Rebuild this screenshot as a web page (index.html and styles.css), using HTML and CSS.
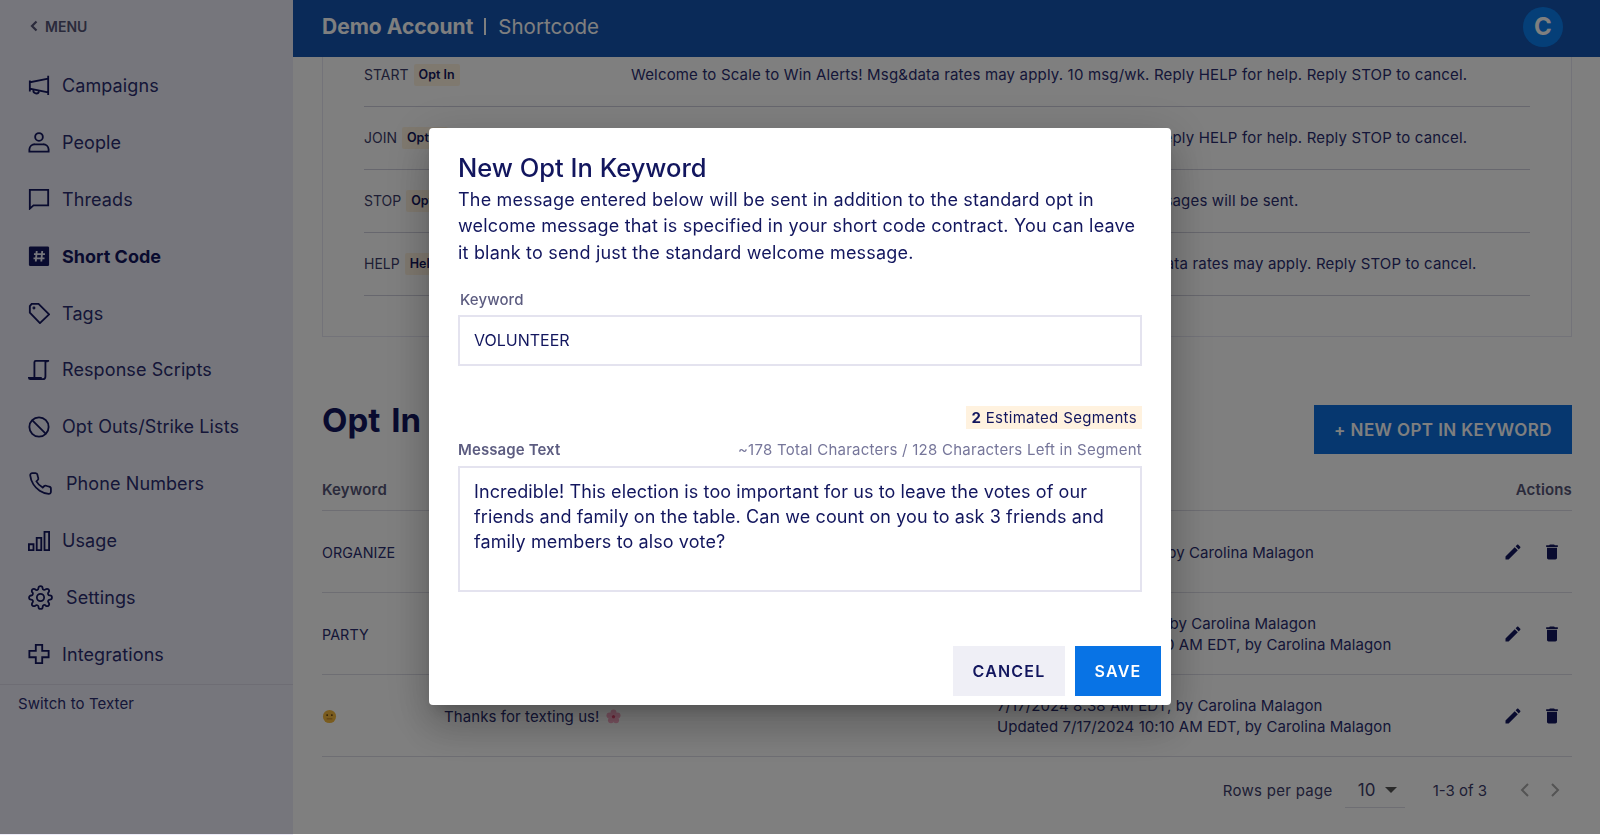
FILE: index.html
```html
<!DOCTYPE html>
<html lang="en">
<head>
<meta charset="utf-8">
<title>Short Code</title>
<link rel="stylesheet" href="styles.css">
</head>
<body>
<div class="app">
  <aside class="sidebar">
    <div class="menu-toggle">
      <svg class="chev" viewBox="0 0 8 12"><path d="M6.500 1.500 2 6l4.500 4.500"/></svg>
      <span>MENU</span>
    </div>
    <nav class="nav">
      <a class="nav-item"><svg class="ico" viewBox="0 0 24 24"><path d="M22 2v21M22 5 2 9v7l20 4M2 7v12"/><path d="M6 17.500a3 3 0 0 0 6 1.300"/></svg><span>Campaigns</span></a>
      <a class="nav-item"><svg class="ico" viewBox="0 0 24 24"><circle cx="12" cy="6.500" r="4.200"/><path d="M1.500 22.500v-2.500a6 6 0 0 1 6-5.500h9a6 6 0 0 1 6 5.500v2.500z"/></svg><span>People</span></a>
      <a class="nav-item"><svg class="ico" viewBox="0 0 24 24"><path d="M2 2h20v17H6l-4 3.500z"/></svg><span>Threads</span></a>
      <a class="nav-item active"><svg class="ico" viewBox="0 0 24 24"><rect class="solid" x="1" y="1.500" width="22" height="21.500" rx="1.500"/><path class="hash" d="M9.500 6.500 8.500 18M15.500 6.500 14.500 18M6.500 10h12M6 14.500h12"/></svg><span>Short Code</span></a>
      <a class="nav-item"><svg class="ico" viewBox="0 0 24 24"><path d="M2 4.500 4 2h7.500L23 13.500 13 23 2 11.500z"/><circle cx="6.500" cy="6.500" r=".6"/></svg><span>Tags</span></a>
      <a class="nav-item"><svg class="ico" viewBox="0 0 24 24"><path d="M7 20V3.500A1.500 1.500 0 0 1 8.500 2H23M20.500 2v1.500M19 2.500V19a3 3 0 0 1-3 3H2.500A1.500 1.500 0 0 1 1 20.500h14"/></svg><span>Response Scripts</span></a>
      <a class="nav-item"><svg class="ico" viewBox="0 0 24 24"><circle cx="12" cy="12" r="10.500"/><path d="m4.500 4.500 15 15"/></svg><span>Opt Outs/Strike Lists</span></a>
      <a class="nav-item wide"><svg class="ico" viewBox="0 0 24 24"><path d="M22 16.920v3a2 2 0 0 1-2.180 2 19.790 19.790 0 0 1-8.630-3.070 19.500 19.500 0 0 1-6-6 19.790 19.790 0 0 1-3.070-8.670A2 2 0 0 1 4.110 2h3a2 2 0 0 1 2 1.720 12.840 12.840 0 0 0 .7 2.810 2 2 0 0 1-.45 2.110L8.090 9.910a16 16 0 0 0 6 6l1.270-1.270a2 2 0 0 1 2.110-.45 12.840 12.840 0 0 0 2.810.7A2 2 0 0 1 22 16.920z"/></svg><span>Phone Numbers</span></a>
      <a class="nav-item"><svg class="ico" viewBox="0 0 24 24"><path d="M1 15.500h5V22H1zM9.500 8.500h5V22h-5zM18 2h5v20h-5z"/></svg><span>Usage</span></a>
      <a class="nav-item wide"><svg class="ico" viewBox="0 0 24 24"><circle cx="12" cy="12" r="3.500"/><path d="M19.400 15a1.650 1.650 0 0 0 .33 1.820l.06.06a2 2 0 0 1 0 2.830 2 2 0 0 1-2.830 0l-.06-.06a1.650 1.650 0 0 0-1.820-.33 1.650 1.650 0 0 0-1 1.510V21a2 2 0 0 1-2 2 2 2 0 0 1-2-2v-.09A1.650 1.650 0 0 0 9 19.400a1.650 1.650 0 0 0-1.820.33l-.06.06a2 2 0 0 1-2.830 0 2 2 0 0 1 0-2.830l.06-.06a1.650 1.650 0 0 0 .33-1.820 1.650 1.650 0 0 0-1.510-1H3a2 2 0 0 1-2-2 2 2 0 0 1 2-2h.09A1.650 1.650 0 0 0 4.600 9a1.650 1.650 0 0 0-.33-1.820l-.06-.06a2 2 0 0 1 0-2.830 2 2 0 0 1 2.830 0l.06.06a1.650 1.650 0 0 0 1.820.33H9a1.650 1.650 0 0 0 1-1.510V3a2 2 0 0 1 2-2 2 2 0 0 1 2 2v.09a1.650 1.650 0 0 0 1 1.510 1.650 1.650 0 0 0 1.820-.33l.06-.06a2 2 0 0 1 2.830 0 2 2 0 0 1 0 2.830l-.06.06a1.650 1.650 0 0 0-.33 1.820V9a1.650 1.650 0 0 0 1.510 1H21a2 2 0 0 1 2 2 2 2 0 0 1-2 2h-.09a1.650 1.650 0 0 0-1.510 1z"/></svg><span>Settings</span></a>
      <a class="nav-item"><svg class="ico" viewBox="0 0 24 24"><path d="M8.500 2h7v6.500H22.500v7h-7V22h-7v-6.500H1.500v-7h7z"/></svg><span>Integrations</span></a>
    </nav>
    <div class="switch">Switch to Texter</div>
  </aside>

  <main class="main">
    <header class="topbar">
      <strong class="account">Demo Account</strong>
      <span class="sep"></span>
      <span class="page-name">Shortcode</span>
      <span class="avatar">C</span>
    </header>
    <div class="content">
      <section class="card">
        <div class="kw-row">
          <div class="kw-name"><span>START</span><span class="chip">Opt In</span></div>
          <div class="kw-msg">Welcome to Scale to Win Alerts! Msg&amp;data rates may apply. 10 msg/wk. Reply HELP for help. Reply STOP to cancel.</div>
        </div>
        <div class="kw-row">
          <div class="kw-name"><span>JOIN</span><span class="chip">Opt In</span></div>
          <div class="kw-msg">Welcome to Scale to Win Alerts! Msg&amp;data rates may apply. 10 msg/wk. Reply HELP for help. Reply STOP to cancel.</div>
        </div>
        <div class="kw-row">
          <div class="kw-name"><span>STOP</span><span class="chip">Opt Out</span></div>
          <div class="kw-msg">You have been unsubscribed from Scale to Win Alerts. No more SMS messages will be sent.</div>
        </div>
        <div class="kw-row">
          <div class="kw-name"><span>HELP</span><span class="chip">Help</span></div>
          <div class="kw-msg">Scale to Win Alerts: Help via helpdesk@scaletowin.com or text us. Msg&amp;data rates may apply. Reply STOP to cancel.</div>
        </div>
      </section>

      <div class="section-head">
        <h2 class="section-title">Opt In Keywords</h2>
        <button class="primary-btn">+ NEW OPT IN KEYWORD</button>
      </div>

      <div class="table">
        <div class="t-row t-head">
          <div class="c-key">Keyword</div>
          <div class="c-msg">Message</div>
          <div class="c-date">Details</div>
          <div class="c-act">Actions</div>
        </div>
        <div class="t-row">
          <div class="c-key">ORGANIZE</div>
          <div class="c-msg">Thanks for organizing with us!</div>
          <div class="c-date">7/1/2024 8:38 AM EDT, by Carolina Malagon</div>
          <div class="c-act"><svg class="act" viewBox="0 0 24 24"><path d="M3 17.250V21h3.750L17.810 9.940l-3.750-3.750L3 17.250zM20.710 7.040c.39-.39.39-1.020 0-1.410l-2.340-2.340c-.39-.39-1.020-.39-1.410 0l-1.830 1.830 3.750 3.750 1.830-1.830z"/></svg><svg class="act" viewBox="0 0 24 24"><path d="M6 19c0 1.100.9 2 2 2h8c1.100 0 2-.9 2-2V7H6v12zM19 4h-3.500l-1-1h-5l-1 1H5v2h14V4z"/></svg></div>
        </div>
        <div class="t-row">
          <div class="c-key">PARTY</div>
          <div class="c-msg">See you at the party!</div>
          <div class="c-date">7/17/2024 8:11 AM EDT, by Carolina Malagon<br>Updated 7/17/2024 10:10 AM EDT, by Carolina Malagon</div>
          <div class="c-act"><svg class="act" viewBox="0 0 24 24"><path d="M3 17.250V21h3.750L17.810 9.940l-3.750-3.750L3 17.250zM20.710 7.040c.39-.39.39-1.020 0-1.410l-2.340-2.340c-.39-.39-1.020-.39-1.410 0l-1.830 1.830 3.750 3.750 1.830-1.830z"/></svg><svg class="act" viewBox="0 0 24 24"><path d="M6 19c0 1.100.9 2 2 2h8c1.100 0 2-.9 2-2V7H6v12zM19 4h-3.500l-1-1h-5l-1 1H5v2h14V4z"/></svg></div>
        </div>
        <div class="t-row">
          <div class="c-key"><svg class="emoji" viewBox="0 0 16 16"><circle cx="8" cy="8" r="7" fill="#f5b83d"/><circle cx="5.500" cy="6.500" r="1" fill="#5a3d10"/><circle cx="10.500" cy="6.500" r="1" fill="#5a3d10"/><path d="M5 10.500h6" stroke="#b57a20" fill="none"/></svg></div>
          <div class="c-msg">Thanks for texting us! <svg class="emoji" viewBox="0 0 16 16"><g fill="#f7a8c4"><circle cx="8" cy="3.700" r="3.200"/><circle cx="12.300" cy="6.800" r="3.200"/><circle cx="10.700" cy="12" r="3.200"/><circle cx="5.300" cy="12" r="3.200"/><circle cx="3.700" cy="6.800" r="3.200"/></g><circle cx="8" cy="8.300" r="1.800" fill="#e2486f"/></svg></div>
          <div class="c-date">7/17/2024 8:38 AM EDT, by Carolina Malagon<br>Updated 7/17/2024 10:10 AM EDT, by Carolina Malagon</div>
          <div class="c-act"><svg class="act" viewBox="0 0 24 24"><path d="M3 17.250V21h3.750L17.810 9.940l-3.750-3.750L3 17.250zM20.710 7.040c.39-.39.39-1.020 0-1.410l-2.340-2.340c-.39-.39-1.020-.39-1.410 0l-1.830 1.830 3.750 3.750 1.830-1.830z"/></svg><svg class="act" viewBox="0 0 24 24"><path d="M6 19c0 1.100.9 2 2 2h8c1.100 0 2-.9 2-2V7H6v12zM19 4h-3.500l-1-1h-5l-1 1H5v2h14V4z"/></svg></div>
        </div>
      </div>

      <div class="pager">
        <span>Rows per page</span>
        <span class="pager-select"><span>10</span><i class="caret"></i></span>
        <span class="pager-count">1-3 of 3</span>
        <svg class="pg" viewBox="0 0 12 16"><path d="M9 2 3 8l6 6"/></svg>
        <svg class="pg" viewBox="0 0 12 16"><path d="m3 2 6 6-6 6"/></svg>
      </div>
    </div>
  </main>
</div>

<div class="overlay">
  <div class="modal">
    <h1 class="modal-title">New Opt In Keyword</h1>
    <p class="modal-desc">The message entered below will be sent in addition to the standard opt in<br>welcome message that is specified in your short code contract. You can leave<br>it blank to send just the standard welcome message.</p>
    <div class="field-label kw-label">Keyword</div>
    <div class="input">VOLUNTEER</div>
    <div class="badge-row"><span class="badge"><b>2</b> Estimated Segments</span></div>
    <div class="msg-head"><span class="field-label">Message Text</span><span class="counter">~178 Total Characters / 128 Characters Left in Segment</span></div>
    <div class="textarea">Incredible! This election is too important for us to leave the votes of our<br>friends and family on the table. Can we count on you to ask 3 friends and<br>family members to also vote?</div>
    <div class="actions">
      <button class="btn cancel">CANCEL</button>
      <button class="btn save">SAVE</button>
    </div>
  </div>
</div>
</body>
</html>
```
FILE: styles.css
```css
* { box-sizing: border-box; }
html, body { margin: 0; height: 100%; }
body {
  font-family: Inter, "Noto Sans", sans-serif;
  color: #12165e;
  background: #fff;
  overflow: hidden;
}

.app { display: flex; height: 835px; overflow: hidden; }

/* Sidebar */
.sidebar { width: 293px; flex: none; background: #edecf8; }
.menu-toggle {
  height: 57px;
  padding: 0 0 5px 30px;
  display: flex;
  align-items: center;
  gap: 7px;
  font-size: 14px;
  font-weight: 600;
  color: #555577;
}
.chev { width: 8px; height: 12px; fill: none; stroke: #555577; stroke-width: 2.2; }
.nav { border-bottom: 1px solid #dcdbe8; padding-bottom: 1px; }
.nav-item {
  height: 56.9px;
  display: flex;
  align-items: center;
  gap: 12px;
  padding-left: 28px;
  font-size: 18px;
  letter-spacing: .1px;
  color: #2a2d70;
}
.ico { width: 22px; height: 22px; flex: none; fill: none; stroke: #12165e; stroke-width: 2; }
.wide { gap: 13px; }
.wide .ico { width: 25px; height: 25px; stroke-width: 1.700; }
.active { font-weight: 700; color: #12165e; letter-spacing: 0; }
.active .solid { fill: #12165e; stroke: none; }
.active .hash { stroke: #edecf8; stroke-width: 2; }
.switch { padding: 9px 18px; font-size: 15px; letter-spacing: .1px; line-height: 20px; color: #2a2d70; }

/* Main */
.main { flex: 1; min-width: 0; display: flex; flex-direction: column; overflow: hidden; }
.topbar {
  height: 57px;
  flex: none;
  position: relative;
  z-index: 1;
  background: #1454b0;
  color: #fff;
  display: flex;
  align-items: center;
  padding: 0 37px 4px 29px;
}
.account { font-size: 21px; font-weight: 700; }
.sep { width: 2px; height: 17px; background: #fff; margin: 0 12px 0 11px; }
.page-name { font-size: 20.500px; }
.avatar {
  margin-left: auto;
  width: 40px;
  height: 40px;
  border-radius: 50%;
  background: #0a7ff0;
  display: flex;
  align-items: center;
  justify-content: center;
  font-size: 24px;
  font-weight: 700;
}
.content { margin-top: -13px; padding: 0 28px 0 29px; }

.card {
  border: 1px solid #e6e6f2;
  border-top: 0;
  padding: 0 41px;
  height: 293px;
}
.kw-row {
  height: 63px;
  border-bottom: 1px solid #cfcfdc;
  display: flex;
  padding-top: 20px;
  font-size: 15px;
  letter-spacing: .17px;
  line-height: 22px;
  color: #2a2d70;
  white-space: nowrap;
}
.kw-name { width: 267px; flex: none; display: flex; align-items: center; height: 22px; gap: 5px; font-size: 14px; letter-spacing: 0; color: #3c3c6a; }
.chip {
  background: #fff2df;
  font-size: 12.500px;
  font-weight: 600;
  padding: 0 5px;
  height: 22px;
  line-height: 22px;
  color: #12165e;
  border-radius: 2px;
}

.section-head {
  display: flex;
  align-items: flex-start;
  justify-content: space-between;
  height: 49px;
  margin: 68px 0 0;
  white-space: nowrap;
}
.section-title { margin: 0; font-size: 33px; line-height: 30px; font-weight: 700; word-spacing: 3px; color: #12165e; }
.primary-btn {
  width: 258px;
  height: 49px;
  border: 0;
  background: #0c6ede;
  color: #fff;
  font: 600 17px Inter, sans-serif;
  letter-spacing: .4px;
}

.t-row {
  height: 82px;
  display: flex;
  align-items: center;
  padding-top: 1px;
  border-bottom: 1px solid #dcdce6;
  font-size: 15px;
  letter-spacing: .08px;
  line-height: 21px;
  color: #2a2d70;
  white-space: nowrap;
}
.t-head {
  height: 57px;
  align-items: flex-end;
  padding: 0 0 10px;
  font-weight: 600;
  letter-spacing: .15px;
  color: #555577;
}
.c-key { width: 122px; flex: none; font-size: 14.300px; }
.t-head .c-key { font-size: 15px; }
.c-msg { width: 553px; flex: none; }
.c-date { flex: 1; }
.c-act { width: 100px; flex: none; display: flex; justify-content: flex-end; gap: 19px; padding-right: 10px; }
.t-head .c-act { padding-right: 0; }
.act { width: 20px; height: 20px; fill: #12165e; }
.emoji { width: 15px; height: 15px; vertical-align: -2px; display: inline-block; margin-left: 2px; }
.c-key .emoji { margin-left: 0; }

.pager {
  height: 66px;
  display: flex;
  align-items: center;
  justify-content: flex-end;
  font-size: 15px;
  letter-spacing: .3px;
  color: #3c3c6a;
  padding-right: 11px;
}
.pager-select {
  width: 60px;
  height: 36px;
  margin: 0 28px 0 12px;
  border-bottom: 1px solid #dcdce6;
  display: flex;
  align-items: center;
  gap: 9px;
  padding-left: 13px;
  font-size: 17px;
}
.caret { width: 0; height: 0; border: 6px solid transparent; border-top-color: #555; border-bottom: 0; }
.pager-count { margin-right: 14px; letter-spacing: 0; }
.pg { width: 12px; height: 16px; fill: none; stroke: #a8a8a8; stroke-width: 2; margin-left: 18px; }

/* Modal */
.overlay {
  position: fixed;
  inset: 0 0 1px 0;
  padding-bottom: 1px;
  background: rgba(0, 0, 0, .5);
  display: flex;
  align-items: center;
  justify-content: center;
  z-index: 10;
}
.modal {
  width: 742px;
  height: 577px;
  background: #fff;
  border-radius: 4px;
  padding: 21px 29px 9px;
  box-shadow: 0 11px 15px -7px rgba(0,0,0,.2), 0 24px 38px 3px rgba(0,0,0,.14), 0 9px 46px 8px rgba(0,0,0,.12);
  white-space: nowrap;
}
.modal-title { margin: 0 0 1px; font-size: 25.500px; font-weight: 500; line-height: 37px; }
.modal-desc { margin: 0; font-size: 18px; letter-spacing: .19px; line-height: 26.300px; }
.field-label { font-size: 15px; font-weight: 600; letter-spacing: .1px; line-height: 20px; color: #5c5c80; }
.kw-label { margin: 24px 0 5px 2px; font-weight: 500; }
.input {
  height: 51px;
  border: 2px solid #e4e3ef;
  padding-left: 14px;
  display: flex;
  align-items: center;
  font-size: 16px;
}
.badge-row { display: flex; justify-content: flex-end; margin-top: 40px; }
.badge { background: #fff2df; height: 23px; line-height: 23px; padding: 0 5px; font-size: 15px; letter-spacing: .35px; }
.msg-head { display: flex; justify-content: space-between; margin: 11px 0 6px; }
.counter { font-size: 15px; letter-spacing: .25px; line-height: 20px; color: #76769a; }
.textarea {
  height: 126px;
  border: 2px solid #e4e3ef;
  padding: 11px 14px;
  font-size: 18px;
  letter-spacing: .1px;
  line-height: 25px;
}
.actions { display: flex; justify-content: flex-end; gap: 10px; margin: 54px -19px 0 0; }
.btn {
  height: 50px;
  border: 0;
  font: 600 16px Inter, sans-serif;
  letter-spacing: 1.200px;
}
.cancel { width: 112px; background: #efeff6; color: #12165e; }
.save { width: 86px; background: #0873e5; color: #fff; }
```
